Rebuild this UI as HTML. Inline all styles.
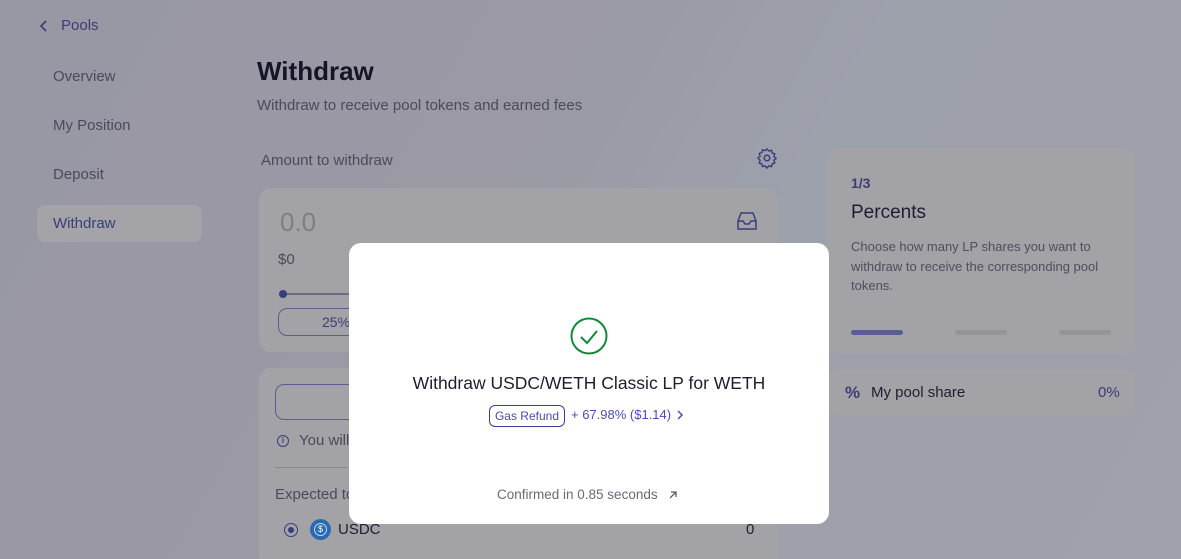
<!DOCTYPE html>
<html><head><style>
*{margin:0;padding:0;box-sizing:border-box}
html,body{width:1181px;height:559px;overflow:hidden}
body{position:relative;font-family:"Liberation Sans",sans-serif;background:linear-gradient(120deg,#9897a4 0%,#9a99a4 40%,#9da1ac 60%,#9fa1ac 100%)}
.a{position:absolute}
.nav{color:#4a4a5a;font-size:15px}
.card{position:absolute;background:#a2a2a7;border-radius:12px}
</style></head><body>
<svg class="a" style="left:38px;top:19px" width="12" height="14"><path d="M8 2L3 7l5 5" stroke="#3a3d78" stroke-width="1.6" fill="none"/></svg>
<div class="a" style="left:61px;top:17px;font-size:15px;color:#3a3d78">Pools</div>
<div class="a nav" style="left:53px;top:68px">Overview</div>
<div class="a nav" style="left:53px;top:117px">My Position</div>
<div class="a nav" style="left:53px;top:166px">Deposit</div>
<div class="a" style="left:37px;top:205px;width:165px;height:37px;border-radius:8px;background:#a3a3a8"></div>
<div class="a" style="left:53px;top:215px;font-size:15px;color:#3a3d78">Withdraw</div>
<div class="a" style="left:257px;top:56px;font-size:26px;font-weight:bold;color:#151528">Withdraw</div>
<div class="a" style="left:257px;top:97px;font-size:15px;color:#4a4a5a">Withdraw to receive pool tokens and earned fees</div>
<div class="a" style="left:261px;top:152px;font-size:15px;color:#4a4a5a">Amount to withdraw</div>
<svg class="a" style="left:756px;top:147px" width="22" height="22" viewBox="0 0 24 24"><circle cx="12" cy="12" r="3" stroke="#3a3d78" stroke-width="1.6" fill="none"/><path d="M12 2l2 2.5 3-1 .5 3 3 1-1 3 2.5 2-2.5 2 1 3-3 1-.5 3-3-1-2 2.5-2-2.5-3 1-.5-3-3-1 1-3L2 12l2.5-2-1-3 3-1 .5-3 3 1z" stroke="#3a3d78" stroke-width="1.5" fill="none" stroke-linejoin="round"/></svg>
<div class="card" style="left:259px;top:188px;width:520px;height:164px"></div>
<div class="a" style="left:280px;top:207px;font-size:26px;color:#7e7e84">0.0</div>
<svg class="a" style="left:736px;top:211px" width="22" height="20"><path d="M2 10l3-8h12l3 8v8H2z M2 10h5l2 3h4l2-3h5" stroke="#3a3d78" stroke-width="1.5" fill="none"/></svg>
<div class="a" style="left:278px;top:251px;font-size:15px;color:#4a4a5a">$0</div>
<div class="a" style="left:282px;top:293px;width:80px;height:2px;background:#6a6a80"></div>
<div class="a" style="left:279px;top:290px;width:8px;height:8px;border-radius:50%;background:#3a3d78"></div>
<div class="a" style="left:278px;top:308px;width:90px;height:28px;border:1px solid #5a5d90;border-radius:9px"></div>
<div class="a" style="left:322px;top:314px;font-size:14px;color:#3a3d78">25%</div>
<div class="card" style="left:259px;top:368px;width:520px;height:200px"></div>
<div class="a" style="left:275px;top:384px;width:90px;height:36px;border:1px solid #5a5d90;border-radius:9px"></div>
<div class="a" style="left:277px;top:435px;width:12px;height:12px;border:1.3px solid #3a3d78;border-radius:50%;font-size:8px;line-height:9px;text-align:center;color:#3a3d78;font-weight:bold">i</div>
<div class="a" style="left:299px;top:432px;font-size:15px;color:#4a4a5a">You will</div>
<div class="a" style="left:275px;top:467px;width:80px;height:1px;background:#888"></div>
<div class="a" style="left:275px;top:486px;font-size:15px;color:#4a4a5a">Expected to</div>
<div class="a" style="left:284px;top:523px;width:14px;height:14px;border:1.5px solid #3a3d78;border-radius:50%"></div>
<div class="a" style="left:288px;top:527px;width:6px;height:6px;background:#3a3d78;border-radius:50%"></div>
<div class="a" style="left:310px;top:519px;width:21px;height:21px;border-radius:50%;background:#2a6ab0"></div>
<div class="a" style="left:314px;top:523px;width:13px;height:13px;border-radius:50%;border:1.5px solid #c8d8ee;color:#fff;font-size:9px;text-align:center;line-height:10px">$</div>
<div class="a" style="left:338px;top:521px;font-size:15px;color:#202030">USDC</div>
<div class="a" style="left:746px;top:521px;font-size:15px;color:#202030">0</div>
<div class="card" style="left:827px;top:148px;width:308px;height:205px"></div>
<div class="a" style="left:851px;top:175px;font-size:14px;font-weight:bold;color:#3a3d78">1/3</div>
<div class="a" style="left:851px;top:202px;font-size:19px;color:#1e1e30">Percents</div>
<div class="a" style="left:851px;top:237px;width:260px;font-size:13px;line-height:19.5px;color:#4e4e5c">Choose how many LP shares you want to withdraw to receive the corresponding pool tokens.</div>
<div class="a" style="left:851px;top:330px;width:52px;height:5px;border-radius:3px;background:#5a5d90"></div>
<div class="a" style="left:955px;top:330px;width:52px;height:5px;border-radius:3px;background:#959599"></div>
<div class="a" style="left:1059px;top:330px;width:52px;height:5px;border-radius:3px;background:#959599"></div>
<div class="card" style="left:827px;top:369px;width:308px;height:47px"></div>
<div class="a" style="left:845px;top:383px;font-size:17px;font-weight:bold;color:#3a3d78">%</div>
<div class="a" style="left:871px;top:384px;font-size:15px;color:#1e1e30">My pool share</div>
<div class="a" style="left:1098px;top:384px;font-size:15px;color:#3a3d78">0%</div>
<div class="a" style="left:349px;top:243px;width:480px;height:281px;background:#fff;border-radius:12px"></div>
<svg class="a" style="left:569px;top:316px" width="40" height="40"><circle cx="20" cy="20" r="17.5" stroke="#13883a" stroke-width="2" fill="none"/><path d="M12 21l6 6 10-12" stroke="#13883a" stroke-width="2" fill="none"/></svg>
<div class="a" style="left:349px;top:373px;width:480px;text-align:center;font-size:17.5px;color:#1e1e30">Withdraw USDC/WETH Classic LP for WETH</div>
<div class="a" style="left:489px;top:405px;width:76px;height:22px;border:1px solid #3a3d9a;border-radius:6px;font-size:12px;color:#4a4dae;text-align:center;line-height:20px">Gas Refund</div>
<div class="a" style="left:571px;top:407px;font-size:13px;color:#4a4dae">+ 67.98% ($1.14)</div>
<svg class="a" style="left:675px;top:409px" width="10" height="12"><path d="M3 2l4 4-4 4" stroke="#4a4dae" stroke-width="1.5" fill="none"/></svg>
<div class="a" style="left:497px;top:487px;font-size:13.5px;color:#6a6a78">Confirmed in 0.85 seconds</div>
<svg class="a" style="left:667px;top:489px" width="12" height="12"><path d="M3 9l6-6M4 3h5v5" stroke="#5a5a6a" stroke-width="1.3" fill="none"/></svg>
</body></html>
